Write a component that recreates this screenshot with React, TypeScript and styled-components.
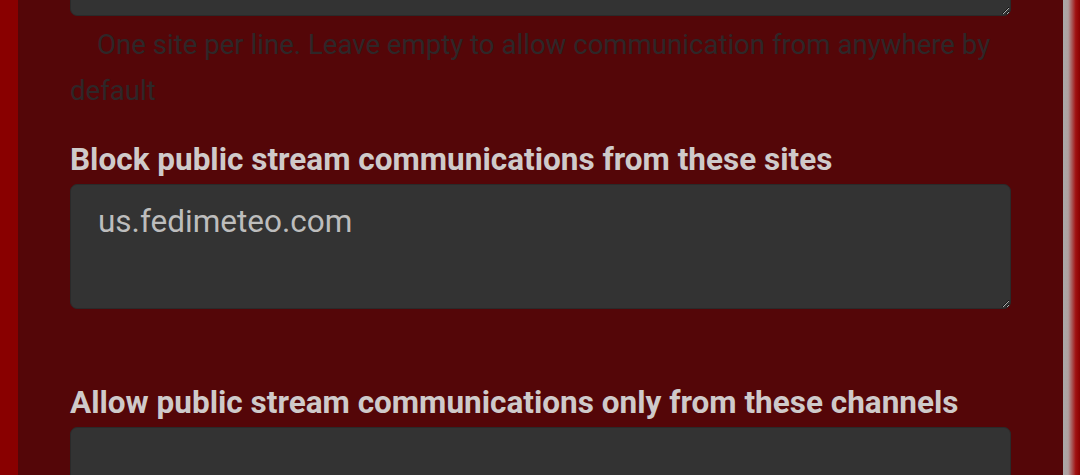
import React from 'react';
import styled, { createGlobalStyle } from 'styled-components';

const GlobalStyle = createGlobalStyle`
  html, body {
    margin: 0;
    padding: 0;
    background: #8a0000;
    overflow: hidden;
  }
  body {
    font-family: Roboto, "Liberation Sans", sans-serif;
  }
`;

const Page = styled.div`
  display: flex;
  width: 1080px;
  height: 475px;
  overflow: hidden;
`;

const LeftEdge = styled.div`
  width: 18px;
  flex: none;
  background: #890000;
`;

const RightEdge = styled.div`
  width: 17px;
  flex: none;
  background: linear-gradient(to right, #a9a9a9 0%, #b0a0a0 30%, #a01010 75%, #8a0000 100%);
`;

const Panel = styled.div`
  flex: 1;
  background: #540608;
  padding: 0 52px;
`;

const Form = styled.div`
  margin-top: -109px;
  display: flex;
  flex-direction: column;
`;

const Field = styled.div<{ $gap?: number }>`
  display: flex;
  flex-direction: column;
  margin-bottom: ${({ $gap }) => $gap ?? 0}px;
`;

const Label = styled.label`
  font-size: 31.5px;
  font-weight: 700;
  color: #cfcaca;
  line-height: 36px;
  margin-bottom: 6px;
`;

const TextArea = styled.textarea`
  box-sizing: border-box;
  height: 125px;
  width: 100%;
  background: #333333;
  border: 1px solid #2a2a2a;
  border-radius: 7px;
  padding: 19px 27px;
  font-family: Roboto, "Liberation Sans", sans-serif;
  font-size: 31.5px;
  line-height: 36px;
  color: #bdbdbd;
  outline: none;
  resize: vertical;
`;

const Help = styled.div`
  font-size: 27.6px;
  line-height: 46px;
  color: #2e2728;
  text-indent: 27px;
  margin-top: 5.5px;
`;

const App = () => (
  <>
    <GlobalStyle />
    <Page>
      <LeftEdge />
      <Panel>
        <Form>
          <Field $gap={28.5}>
            <TextArea readOnly defaultValue="" />
            <Help>One site per line. Leave empty to allow communication from anywhere by default</Help>
          </Field>
          <Field $gap={76}>
            <Label>Block public stream communications from these sites</Label>
            <TextArea readOnly defaultValue="us.fedimeteo.com" />
          </Field>
          <Field>
            <Label>Allow public stream communications only from these channels</Label>
            <TextArea readOnly defaultValue="" />
          </Field>
        </Form>
      </Panel>
      <RightEdge />
    </Page>
  </>
);

export default App;
